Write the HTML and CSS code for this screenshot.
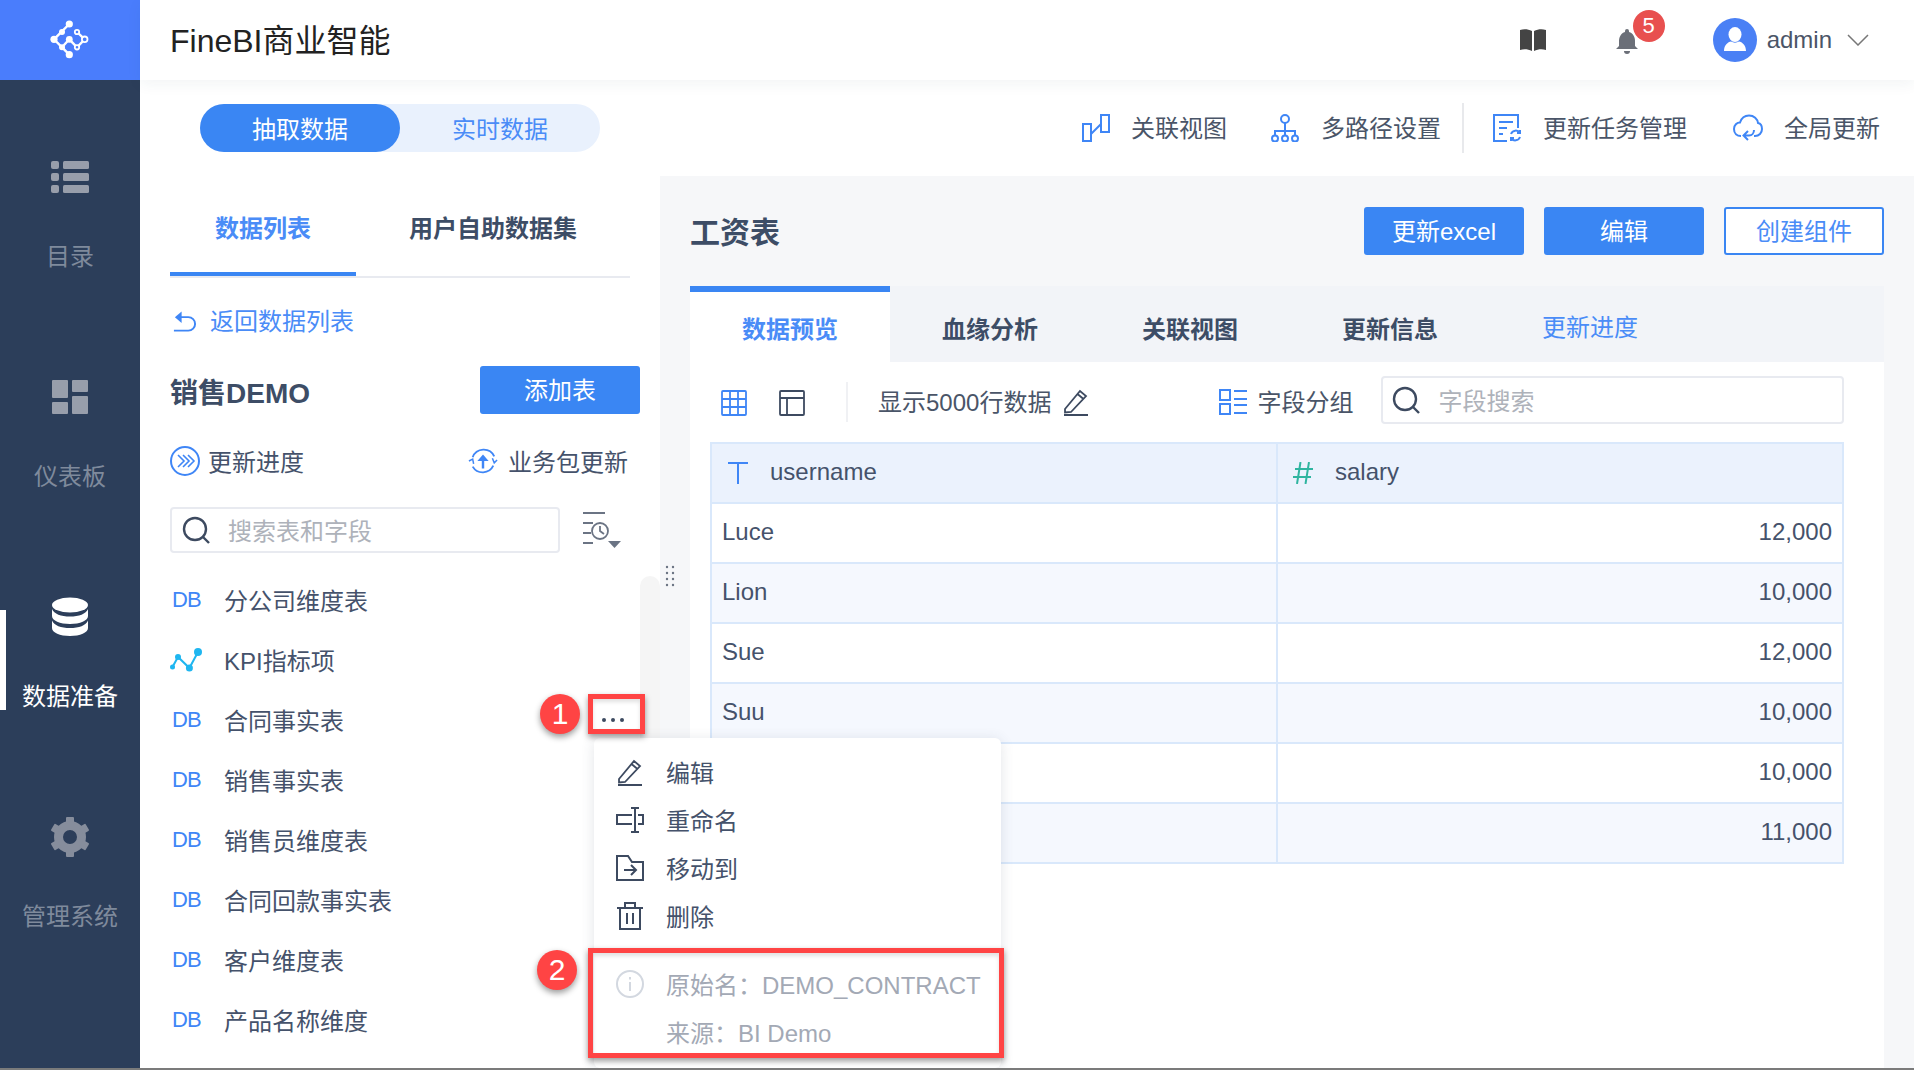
FILE: index.html
```html
<!DOCTYPE html>
<html lang="zh-CN">
<head>
<meta charset="utf-8">
<title>FineBI商业智能</title>
<link rel="stylesheet" href="styles.css">
</head>
<body>
<div class="app">
  <aside class="sidebar">
    <div class="logo">
      <svg class="logo-svg" viewBox="0 0 80 80">
        <g fill="none" stroke="#fff" stroke-width="2.4">
          <path d="M39.3 24 24 39.3 39.3 54.7M32 47.3l7.3-8 7.7 8 7.7-8L47 32"/>
        </g>
        <g fill="#fff">
          <circle cx="39.3" cy="24" r="3.6"/><circle cx="32" cy="32" r="3"/><circle cx="24" cy="39.3" r="3.6"/><circle cx="32" cy="47.3" r="3"/><circle cx="39.3" cy="54.7" r="3.6"/><circle cx="39.3" cy="39.3" r="3.4"/>
        </g>
        <g fill="#4a7dfc" stroke="#fff" stroke-width="1.8">
          <circle cx="47" cy="32" r="2.2"/><circle cx="54.7" cy="39.3" r="2.8"/><circle cx="47" cy="47.3" r="2.2"/>
        </g>
      </svg>
    </div>
    <nav class="nav">
      <a class="nav-item">
        <svg class="nav-icon" viewBox="0 0 40 40" fill="#989eab"><rect x="1" y="4" width="8" height="8" rx="2"/><rect x="13" y="4" width="26" height="8" rx="1.5"/><rect x="1" y="16" width="8" height="8" rx="2"/><rect x="13" y="16" width="26" height="8" rx="1.5"/><rect x="1" y="28" width="8" height="8" rx="2"/><rect x="13" y="28" width="26" height="8" rx="1.5"/></svg>
        <span>目录</span>
      </a>
      <a class="nav-item">
        <svg class="nav-icon" viewBox="0 0 40 40" fill="#989eab"><rect x="2" y="3" width="16" height="18" rx="1"/><rect x="22" y="3" width="16" height="12" rx="1"/><rect x="2" y="25" width="16" height="12" rx="1"/><rect x="22" y="19" width="16" height="18" rx="1"/></svg>
        <span>仪表板</span>
      </a>
      <a class="nav-item is-active">
        <svg class="nav-icon" viewBox="0 0 40 40" fill="#fff"><ellipse cx="20" cy="8" rx="18" ry="7.5"/><path d="M2 12c2 5 9 7.500 18 7.500S36 17 38 12v7c0 4.500-8 8-18 8S2 23.500 2 19z"/><path d="M2 23.500c2 5 9 7.500 18 7.500s16-2.500 18-7.500V31c0 4.500-8 8-18 8S2 35.500 2 31z"/></svg>
        <span>数据准备</span>
      </a>
      <a class="nav-item">
        <svg class="nav-icon" viewBox="0 0 40 40">
          <circle cx="20" cy="20" r="11.500" fill="none" stroke="#868d9c" stroke-width="9"/>
          <g fill="#868d9c"><rect x="16" y="0" width="8" height="7" rx="1"/><rect x="16" y="0" width="8" height="7" rx="1" transform="rotate(60 20 20)"/><rect x="16" y="0" width="8" height="7" rx="1" transform="rotate(120 20 20)"/><rect x="16" y="0" width="8" height="7" rx="1" transform="rotate(180 20 20)"/><rect x="16" y="0" width="8" height="7" rx="1" transform="rotate(240 20 20)"/><rect x="16" y="0" width="8" height="7" rx="1" transform="rotate(300 20 20)"/></g>
        </svg>
        <span>管理系统</span>
      </a>
    </nav>
  </aside>

  <div class="main">
    <header class="header">
      <h1 class="brand">FineBI商业智能</h1>
      <div class="header-right">
        <svg class="hd-book" viewBox="0 0 28 24" fill="#444"><path d="M1 2c4-1.500 8-1 12 1v20c-4-2-8-2.500-12-1zM27 2c-4-1.500-8-1-12 1v20c4-2 8-2.500 12-1z"/></svg>
        <span class="bell-wrap">
          <svg class="hd-bell" viewBox="0 0 24 26" fill="#6b6f78"><path d="M12 1a2 2 0 0 1 2 2v1c4 1 6 5 6 9v5l3 3H1l3-3v-5c0-4 2-8 6-9V3a2 2 0 0 1 2-2z"/><path d="M9 23h6a3 3 0 0 1-6 0z"/></svg>
          <span class="bell-badge">5</span>
        </span>
        <span class="avatar">
          <svg viewBox="0 0 44 44" class="avatar-svg" fill="#fff"><ellipse cx="22" cy="16.500" rx="6.500" ry="7.500"/><path d="M11 33c0-6 4-9 7-9.500 2.500 1.500 5.500 1.500 8 0 3 .5 7 3.500 7 9.500z"/></svg>
        </span>
        <span class="admin">admin</span>
        <svg class="chev" viewBox="0 0 22 12" fill="none" stroke="#777" stroke-width="1.500"><path d="M1 1l10 10L21 1"/></svg>
      </div>
    </header>

    <div class="topbar">
      <div class="seg">
        <span class="seg-item seg-on">抽取数据</span>
        <span class="seg-item">实时数据</span>
      </div>
      <div class="tools">
        <span class="tool">
          <svg class="ti" viewBox="0 0 28 28" fill="none" stroke="#3f86f6" stroke-width="2"><rect x="1" y="10" width="8" height="17"/><rect x="19" y="1" width="8" height="17"/><path d="M9 20l10-10"/></svg>
          <span>关联视图</span>
        </span>
        <span class="tool tool-2">
          <svg class="ti-wide" viewBox="0 0 30 28" fill="none" stroke="#3f86f6" stroke-width="2"><circle cx="15" cy="5" r="4"/><path d="M15 9v8M5 22v-5h20v5M15 17v5"/><circle cx="5" cy="24.500" r="3"/><circle cx="15" cy="24.500" r="3"/><circle cx="25" cy="24.500" r="3"/></svg>
          <span>多路径设置</span>
        </span>
        <span class="tool-div"></span>
        <span class="tool tool-3">
          <svg class="ti-wide" viewBox="0 0 30 28" fill="none" stroke="#3f86f6" stroke-width="2"><path d="M15 27H2V1h24v13M7 8h14M7 14h8M7 20h4"/><path d="M19 20a5 5 0 0 1 9-1M28 16v3h-3M28 23a5 5 0 0 1-9 1M19 27v-3h3"/></svg>
          <span>更新任务管理</span>
        </span>
        <span class="tool tool-4">
          <svg class="ti-wide" viewBox="0 0 30 28" fill="none" stroke="#3f86f6" stroke-width="2"><path d="M8 22c-4 0-7-2.500-7-7 0-4 3-6.500 6-6.500C8.500 4 12 1.500 16 1.500c5 0 8.500 3.500 9 7.500 2.500.5 4 3 4 6 0 4-3 7-7 7h-1"/><path d="M21 16c0 3-2 5.500-5 5.500h-5M15 17l-4.500 4.500L15 26"/></svg>
          <span>全局更新</span>
        </span>
      </div>
    </div>

    <div class="content">
      <section class="left">
        <div class="ltabs">
          <span class="ltab ltab-on">数据列表</span>
          <span class="ltab">用户自助数据集</span>
        </div>
        <a class="back">
          <svg class="back-i" viewBox="0 0 26 24" fill="none" stroke="#3f86f6" stroke-width="2"><path d="M2 22h15a7 7 0 0 0 0-14H6"/><path d="M10 2 3 8l7 6z" fill="#3f86f6" stroke="none"/></svg>
          <span>返回数据列表</span>
        </a>
        <div class="pkg">
          <h2 class="pkg-name">销售DEMO</h2>
          <button class="btn btn-add">添加表</button>
        </div>
        <div class="pkg-actions">
          <span class="act">
            <svg class="act-i" viewBox="0 0 30 30" fill="none" stroke="#3f86f6" stroke-width="2"><circle cx="15" cy="15" r="14"/><path d="M8 9l6 6-6 6M13 9l6 6-6 6M18 9l6 6-6 6" stroke-width="1.600"/></svg>
            <span>更新进度</span>
          </span>
          <span class="act act-r">
            <svg class="act-i" viewBox="0 0 32 30" fill="none" stroke="#3f86f6" stroke-width="2"><path d="M5 11A12.500 12.500 0 0 1 28 10M27 20A12.500 12.500 0 0 1 5 21"/><path d="M1 15l4-2 1 5M31 14l-3 3-2-5" stroke-width="1.600"/><path d="M16 23V12" stroke-width="2.600"/><path d="M10 15l6-7 6 7z" fill="#3f86f6" stroke="none"/></svg>
            <span>业务包更新</span>
          </span>
        </div>
        <div class="search-row">
          <div class="search search-l">
            <svg class="s-i" viewBox="0 0 28 28" fill="none" stroke="#3d4a60" stroke-width="2.400"><circle cx="13" cy="13" r="11"/><path d="M21 21l6 6"/></svg>
            <span class="ph">搜索表和字段</span>
          </div>
          <svg class="sort-i" viewBox="0 0 42 38" fill="none" stroke="#6b7484" stroke-width="1.800"><path d="M2 2h22M2 12h10M2 22h8M2 32h10"/><circle cx="19" cy="20" r="8"/><path d="M19 15v5l4 3"/><path d="M27 30h13l-6.500 7z" fill="#6b7484" stroke="none"/></svg>
        </div>
        <ul class="list">
          <li class="row"><span class="db">DB</span><span class="row-t">分公司维度表</span></li>
          <li class="row"><svg class="kpi" viewBox="0 0 32 24"><path d="M2.500 19 8 9l11.400 11L28 4" fill="none" stroke="#1fb6f0" stroke-width="2"/><g fill="#1fb6f0"><circle cx="2.500" cy="19" r="2.500"/><circle cx="8" cy="9" r="3"/><circle cx="19.400" cy="20" r="3.500"/><circle cx="28" cy="4" r="4"/></g></svg><span class="row-t">KPI指标项</span></li>
          <li class="row"><span class="db">DB</span><span class="row-t">合同事实表</span></li>
          <li class="row"><span class="db">DB</span><span class="row-t">销售事实表</span></li>
          <li class="row"><span class="db">DB</span><span class="row-t">销售员维度表</span></li>
          <li class="row"><span class="db">DB</span><span class="row-t">合同回款事实表</span></li>
          <li class="row"><span class="db">DB</span><span class="row-t">客户维度表</span></li>
          <li class="row"><span class="db">DB</span><span class="row-t">产品名称维度</span></li>
        </ul>
      </section>

      <section class="right">
        <div class="title-row">
          <h2 class="tbl-name">工资表</h2>
          <div class="btns">
            <button class="btn btn-top">更新excel</button>
            <button class="btn btn-top">编辑</button>
            <button class="btn btn-top btn-line">创建组件</button>
          </div>
        </div>
        <div class="rtabs">
          <span class="rtab rtab-on">数据预览</span>
          <span class="rtab">血缘分析</span>
          <span class="rtab">关联视图</span>
          <span class="rtab">更新信息</span>
          <span class="rtab rtab-link">更新进度</span>
        </div>
        <div class="panel">
          <div class="ptools">
            <svg class="p-i" viewBox="0 0 26 26" fill="none" stroke="#3f86f6" stroke-width="1.800"><rect x="1" y="1" width="24" height="24" rx="1"/><path d="M1 9h24M1 17h24M9 1v24M17 1v24"/></svg>
            <svg class="p-i p-i2" viewBox="0 0 26 26" fill="none" stroke="#3d4a60" stroke-width="1.800"><rect x="1" y="1" width="24" height="24" rx="1"/><path d="M1 8h24M8 8v17"/></svg>
            <span class="p-div"></span>
            <span class="p-text">显示5000行数据</span>
            <svg class="pencil pencil-tb" viewBox="0 0 26 28" fill="none" stroke="#3d4a60" stroke-width="1.800"><path d="M2 21 17 3l6 5L8 24l-6 .5zM14.500 6l6 5"/><path d="M1 27h24" stroke-width="2"/></svg>
            <span class="p-group">
              <svg class="g-i" viewBox="0 0 28 26" fill="none" stroke="#3f86f6" stroke-width="2"><rect x="1" y="1" width="10" height="10"/><rect x="1" y="15" width="10" height="10"/><path d="M15 2h13M15 10h13M15 16h13M15 24h13"/></svg>
              <span class="p-text">字段分组</span>
            </span>
            <div class="search search-r">
              <svg class="s-i" viewBox="0 0 28 28" fill="none" stroke="#3d4a60" stroke-width="2.400"><circle cx="13" cy="13" r="11"/><path d="M21 21l6 6"/></svg>
              <span class="ph">字段搜索</span>
            </div>
          </div>
          <table class="grid">
            <thead>
              <tr>
                <th class="c1"><svg class="t-i" viewBox="0 0 20 22" fill="none" stroke="#3f86f6" stroke-width="2"><path d="M0 1h20M10 1v21"/></svg>username</th>
                <th><svg class="hash" viewBox="0 0 20 22" fill="none" stroke="#2fb5a0" stroke-width="2"><path d="M7.500 0 4 22M16 0l-3.500 22M2 7h18M0 15h18"/></svg>salary</th>
              </tr>
            </thead>
            <tbody>
              <tr><td>Luce</td><td class="num">12,000</td></tr>
              <tr class="alt"><td>Lion</td><td class="num">10,000</td></tr>
              <tr><td>Sue</td><td class="num">12,000</td></tr>
              <tr class="alt"><td>Suu</td><td class="num">10,000</td></tr>
              <tr><td></td><td class="num">10,000</td></tr>
              <tr class="alt"><td></td><td class="num">11,000</td></tr>
            </tbody>
          </table>
        </div>
      </section>
    </div>
  </div>

  <div class="scroll-thumb"></div>
  <svg class="handle" viewBox="0 0 10 22" fill="#6b7484"><circle cx="2" cy="2" r="1.200"/><circle cx="8" cy="2" r="1.200"/><circle cx="2" cy="8" r="1.200"/><circle cx="8" cy="8" r="1.200"/><circle cx="2" cy="14" r="1.200"/><circle cx="8" cy="14" r="1.200"/><circle cx="2" cy="20" r="1.200"/><circle cx="8" cy="20" r="1.200"/></svg>

  <div class="menu">
    <div class="m-item">
      <svg class="m-i" viewBox="0 0 28 28" fill="none" stroke="#3d4a60" stroke-width="1.800"><path d="M3 21 18 3l6 5L9 24l-6 .5zM15.500 6l6 5"/><path d="M2 27h24" stroke-width="2"/></svg>
      <span>编辑</span>
    </div>
    <div class="m-item">
      <svg class="m-i" viewBox="0 0 28 26" fill="none" stroke="#3d4a60" stroke-width="2"><path d="M16 8H1v9h15M22 8h5v9h-5M19 1v24M15 1h8M15 25h8"/></svg>
      <span>重命名</span>
    </div>
    <div class="m-item">
      <svg class="m-i" viewBox="0 0 28 26" fill="none" stroke="#3d4a60" stroke-width="2"><path d="M1 25V1h11l4 6h11v18z"/><path d="M8 15h12M15 10l5 5-5 5"/></svg>
      <span>移动到</span>
    </div>
    <div class="m-item">
      <svg class="m-i" viewBox="0 0 28 28" fill="none" stroke="#3d4a60" stroke-width="2"><path d="M1 6h26M9 6V1h10v5M4 6v21h20V6M11 11v11M17 11v11"/></svg>
      <span>删除</span>
    </div>
    <div class="m-info">
      <div class="m-item m-muted">
        <svg class="m-i" viewBox="0 0 28 28" fill="none" stroke="#d3d8e0" stroke-width="2"><circle cx="14" cy="14" r="13"/><path d="M14 12v9M14 7v2.500"/></svg>
        <span>原始名：DEMO_CONTRACT</span>
      </div>
      <div class="m-item m-muted">
        <span class="m-blank"></span>
        <span>来源：BI Demo</span>
      </div>
    </div>
  </div>

  <div class="mark mark-1"></div>
  <div class="mark mark-2"></div>
  <span class="pin pin-1">1</span>
  <span class="pin pin-2">2</span>
  <svg class="dots" viewBox="0 0 22 4" fill="#3d4a60"><circle cx="2" cy="2" r="2"/><circle cx="11" cy="2" r="2"/><circle cx="20" cy="2" r="2"/></svg>
</div>
</body>
</html>
```

FILE: styles.css
```css
* { box-sizing: border-box; }
html, body { margin: 0; padding: 0; }
body {
  font-family: "Liberation Sans", "Noto Sans CJK SC", sans-serif;
  font-size: 24px;
  color: #45526b;
  background: #fff;
  overflow: hidden;
}
h1, h2, ul { margin: 0; padding: 0; }
ul { list-style: none; }
svg { display: block; flex: none; }

.app {
  position: relative;
  display: flex;
  width: 1914px;
  height: 1070px;
  overflow: hidden;
  border-bottom: 2px solid #7b7b7b;
}

/* sidebar */
.sidebar { width: 140px; flex: none; background: #2c3e5a; }
.logo { height: 80px; background: #4a7dfc; display: flex; align-items: center; justify-content: center; }
.logo-svg { width: 80px; height: 80px; }
.nav-item {
  position: relative;
  height: 220px;
  padding-top: 77px;
  display: flex;
  flex-direction: column;
  align-items: center;
  color: #7f8a9c;
}
.nav-icon { width: 40px; height: 40px; }
.nav-item span { margin-top: 42px; line-height: 36px; }
.is-active { color: #fff; }
.is-active::before {
  content: "";
  position: absolute;
  left: 0;
  top: 90px;
  width: 6px;
  height: 100px;
  background: #fff;
}

/* header */
.main { flex: 1; display: flex; flex-direction: column; min-width: 0; }
.header {
  position: relative;
  height: 80px;
  flex: none;
  display: flex;
  align-items: center;
  justify-content: space-between;
  padding: 0 45px 0 30px;
  box-shadow: 0 4px 14px rgba(40, 60, 90, .06);
}
.brand { font-size: 32px; font-weight: 400; color: #222; padding-bottom: 4px; }
.header-right { display: flex; align-items: center; }
.hd-book { width: 28px; height: 24px; }
.bell-wrap { position: relative; margin-left: 68px; }
.hd-bell { width: 24px; height: 26px; margin-top: 2px; }
.bell-badge {
  position: absolute;
  left: 18px;
  top: -16px;
  width: 32px;
  height: 32px;
  border-radius: 50%;
  background: #e8504f;
  color: #fff;
  font-size: 22px;
  line-height: 32px;
  text-align: center;
}
.avatar { width: 44px; height: 44px; margin-left: 74px; border-radius: 50%; background: #4a80f5; }
.avatar-svg { width: 44px; height: 44px; }
.admin { margin-left: 10px; color: #4b5567; }
.chev { width: 22px; height: 12px; margin-left: 15px; }

/* top toolbar */
.topbar {
  height: 96px;
  flex: none;
  display: flex;
  align-items: center;
  justify-content: space-between;
  padding: 0 34px 0 60px;
}
.seg { width: 400px; height: 48px; display: flex; border-radius: 24px; background: #e9f1fd; color: #4a8cf7; }
.seg-item { width: 200px; line-height: 52px; text-align: center; border-radius: 24px; }
.seg-on { background: #3a86f3; color: #fff; }
.tools { display: flex; align-items: center; height: 50px; }
.tool { display: flex; align-items: center; gap: 21px; color: #4a5568; }
.tool span { position: relative; top: -2px; }
.ti { width: 28px; height: 28px; }
.ti-wide { width: 30px; height: 28px; }
.tool-2 { margin-left: 43px; }
.tool-div { width: 2px; height: 50px; margin: 0 28px 0 21px; background: #e8e9ec; }
.tool-4 { margin-left: 46px; }

/* content */
.content { flex: 1; display: flex; min-height: 0; }
.left { width: 520px; flex: none; padding: 0 20px 0 30px; }
.right { flex: 1; background: #f6f7f9; padding: 0 30px; display: flex; flex-direction: column; min-width: 0; }

.ltabs { position: relative; display: flex; height: 102px; width: 460px; border-bottom: 2px solid #e8eaf0; font-weight: 700; color: #3d4d66; }
.ltab { position: relative; line-height: 106px; }
.ltab:first-child { width: 186px; text-align: center; }
.ltab:last-child { margin-left: 53px; }
.ltab-on { color: #4a8cf7; }
.ltab-on::after { content: ""; position: absolute; left: 0; right: 0; bottom: 0; height: 4px; background: #3a86f3; }

.back { display: flex; align-items: center; height: 48px; margin-top: 19px; color: #4a8cf7; gap: 13px; padding-left: 2px; }
.back span { position: relative; top: -2px; }
.back-i { width: 25px; height: 24px; }

.pkg { display: flex; align-items: center; justify-content: space-between; height: 48px; margin-top: 21px; }
.pkg-name { font-size: 28px; font-weight: 700; color: #3d4d66; position: relative; top: 1px; }
.btn { font: inherit; border: 0; border-radius: 3px; background: #3a86f3; color: #fff; padding: 0 0 3px; }
.btn-add { width: 160px; height: 48px; }

.pkg-actions { display: flex; justify-content: space-between; align-items: center; height: 46px; margin-top: 24px; padding-right: 12px; }
.act { display: flex; align-items: center; gap: 8px; }
.act span { position: relative; top: -1px; }
.act-i { width: 30px; height: 30px; }
.act-r { gap: 10px; }

.search-row { display: flex; align-items: center; margin-top: 23px; }
.search { display: flex; align-items: center; height: 46px; border: 2px solid #e8eaf0; border-radius: 4px; background: #fff; }
.search-l { width: 390px; padding-left: 10px; gap: 18px; }
.s-i { width: 28px; height: 28px; }
.ph { color: #aeb2ba; position: relative; top: -1px; }
.sort-i { width: 42px; height: 38px; margin-left: 21px; }

.list { margin-top: 17px; }
.row { display: flex; align-items: center; height: 60px; }
.row-t { position: relative; top: -1px; }
.db { width: 54px; flex: none; padding-left: 2px; font-size: 22px; letter-spacing: -1px; color: #3f86f6; }
.kpi { width: 32px; height: 24px; margin-right: 22px; }

/* right */
.title-row { height: 110px; flex: none; display: flex; align-items: flex-start; justify-content: space-between; padding-top: 31px; }
.tbl-name { font-size: 30px; font-weight: 700; color: #3d4d66; line-height: 52px; }
.btns { display: flex; gap: 20px; }
.btn-top { width: 160px; height: 48px; }
.btn-line { background: #fff; border: 2px solid #3a86f3; color: #4a8cf7; }

.rtabs { height: 76px; flex: none; display: flex; background: #f2f4f8; font-weight: 700; color: #3d4d66; }
.rtab { width: 200px; text-align: center; line-height: 88px; }
.rtab-on { background: #fff; border-top: 6px solid #3a86f3; color: #4a8cf7; line-height: 76px; }
.rtab-link { font-weight: 400; color: #4a8cf7; line-height: 84px; }

.panel { flex: 1; background: #fff; padding: 0 40px 0 21px; }
.ptools { height: 80px; display: flex; align-items: center; padding-left: 10px; white-space: nowrap; }
.p-i { width: 26px; height: 26px; position: relative; top: 1px; }
.p-i2 { margin-left: 32px; }
.p-div { width: 2px; height: 40px; margin: 0 30px 0 41px; background: #f0f1f4; }
.p-text { color: #4a5568; position: relative; top: -2px; }
.pencil-tb { width: 26px; height: 28px; margin-left: 12px; }
.p-group { display: flex; align-items: center; gap: 10px; margin-left: 130px; }
.g-i { width: 28px; height: 26px; }
.search-r { width: 464px; height: 48px; margin-left: 28px; padding-left: 9px; gap: 18px; position: relative; top: -2px; }

.grid { width: 1134px; border-collapse: collapse; table-layout: fixed; color: #45526b; margin-left: -1px; }
.grid th, .grid td { height: 60px; padding: 0 10px 2px; border: 2px solid #d9e8fb; font-weight: 400; text-align: left; }
.grid th { background: #ebf2fd; }
.c1 { width: 566px; }
.t-i { display: inline-block; width: 20px; height: 22px; margin: 0 22px 0 6px; vertical-align: -4px; }
.hash { display: inline-block; width: 20px; height: 22px; margin: 0 22px 0 5px; vertical-align: -4px; }
.grid .num { text-align: right; }
.alt td { background: #f5f8fe; }

/* overlays */
.scroll-thumb { position: absolute; left: 640px; top: 576px; width: 20px; height: 170px; background: #f5f5f5; border-radius: 10px 10px 0 0; }
.handle { position: absolute; left: 665px; top: 565px; width: 10px; height: 22px; }
.menu {
  position: absolute;
  left: 594px;
  top: 738px;
  width: 407px;
  height: 330px;
  padding-top: 10px;
  border-radius: 6px;
  background: #fff;
  box-shadow: 0 2px 14px rgba(60, 70, 90, .14);
  font-size: 24px;
}
.m-item { display: flex; align-items: center; height: 48px; padding-left: 22px; gap: 22px; }
.m-item span { position: relative; top: -1px; }
.m-i { width: 28px; height: 28px; }
.m-info { margin-top: 20px; }
.m-muted { color: #a3a9b5; }
.m-blank { width: 28px; flex: none; }
.mark {
  position: absolute;
  border: 5px solid #ff4444;
  box-shadow: 0 3px 6px rgba(0, 0, 0, .4), inset 0 3px 4px rgba(0, 0, 0, .12);
}
.mark-1 { left: 588px; top: 694px; width: 57px; height: 40px; }
.mark-2 { left: 588px; top: 948px; width: 416px; height: 110px; }
.pin {
  position: absolute;
  width: 40px;
  height: 40px;
  border-radius: 50%;
  background: #ff4444;
  color: #fff;
  font-size: 30px;
  line-height: 40px;
  text-align: center;
  box-shadow: 0 3px 6px rgba(0, 0, 0, .4);
}
.pin-1 { left: 540px; top: 694px; }
.pin-2 { left: 537px; top: 950px; }
.dots { position: absolute; left: 602px; top: 718px; width: 22px; height: 4px; }
```
